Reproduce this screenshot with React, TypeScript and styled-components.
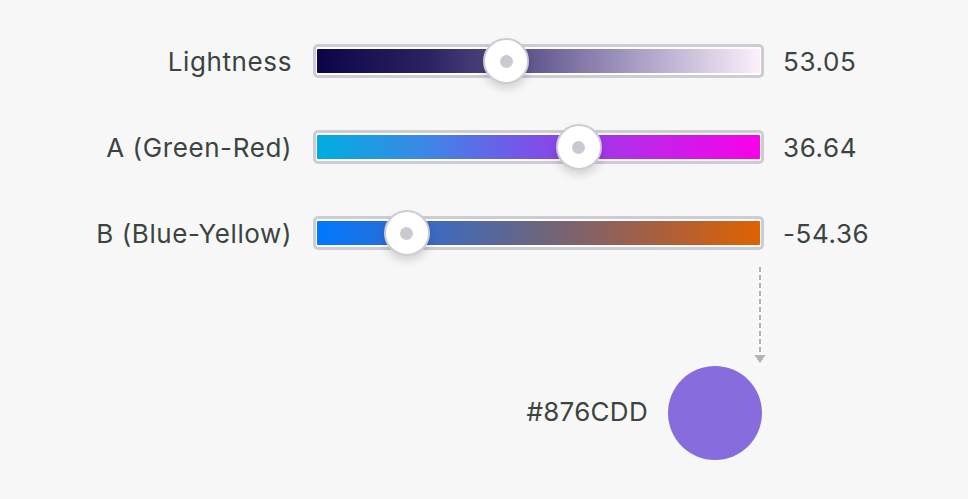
import styled, { createGlobalStyle } from 'styled-components';

const GlobalStyle = createGlobalStyle`
  html, body {
    margin: 0;
    padding: 0;
    background: #f7f7f7;
  }
  body {
    font-family: Inter, "Liberation Sans", sans-serif;
    color: #3a4441;
  }
`;

const Page = styled.div`
  width: 968px;
  height: 499px;
  padding-top: 44px;
  box-sizing: border-box;
  overflow: hidden;
`;

const Sliders = styled.div`
  display: grid;
  grid-template-columns: 292px 451px auto;
  grid-auto-rows: 34px;
  column-gap: 21px;
  row-gap: 52px;
  align-items: center;
`;

const Label = styled.div`
  text-align: right;
  font-size: 26px;
  letter-spacing: 0.6px;
  white-space: nowrap;
`;

const Value = styled.div`
  font-size: 26px;
  letter-spacing: 0.6px;
  margin-left: -2px;
`;

const Track = styled.div`
  position: relative;
  height: 34px;
  box-sizing: border-box;
  border: 3px solid #cdccd4;
  border-radius: 5px;
  background: #fff;
  padding: 2px 1px;
`;

const Fill = styled.div<{ $gradient: string }>`
  height: 100%;
  border-radius: 1px;
  background: ${(p) => p.$gradient};
`;

const Thumb = styled.div<{ $pos: number }>`
  position: absolute;
  top: 50%;
  left: ${(p) => p.$pos}%;
  width: 46px;
  height: 46px;
  box-sizing: border-box;
  transform: translate(-50%, -50%);
  border-radius: 50%;
  border: 2px solid #cdccd4;
  background: #fff;
  box-shadow: 0 5px 9px rgba(0, 0, 0, 0.14);
  display: flex;
  align-items: center;
  justify-content: center;

  &::after {
    content: '';
    width: 13px;
    height: 13px;
    border-radius: 50%;
    background: #c9c9d1;
  }
`;

const Result = styled.div`
  width: 762px;
  display: flex;
  flex-direction: column;
  align-items: flex-end;
  margin-top: 17px;
`;

const Arrow = styled.svg`
  display: block;
  margin-right: -4px;
`;

const Swatch = styled.div`
  display: flex;
  align-items: center;
  gap: 20px;
  margin-top: 2px;
`;

const HexCode = styled.span`
  font-size: 26px;
  letter-spacing: 0.3px;
  margin-top: -4px;
`;

const Circle = styled.div<{ $color: string }>`
  width: 94px;
  height: 94px;
  border-radius: 50%;
  background: ${(p) => p.$color};
`;

const channels = [
  {
    label: 'Lightness',
    value: '53.05',
    pos: 42.7,
    gradient:
      'linear-gradient(to right, #0b0548 0%, #2b2262 25%, #675c92 50%, #b1a6ca 75%, #fbf0fa 100%)',
  },
  {
    label: 'A (Green-Red)',
    value: '36.64',
    pos: 59,
    gradient:
      'linear-gradient(to right, #00ade0 0%, #3e86e6 25%, #7f4ee8 50%, #c025ea 75%, #fa00e9 100%)',
  },
  {
    label: 'B (Blue-Yellow)',
    value: '-54.36',
    pos: 20.4,
    gradient:
      'linear-gradient(to right, #0078ff 0%, #3a6bc4 25%, #6b657f 50%, #a45f44 75%, #df6200 100%)',
  },
];

export default function App() {
  return (
    <Page>
      <GlobalStyle />
      <Sliders>
        {channels.map((c) => [
          <Label key={c.label + '-l'}>{c.label}</Label>,
          <Track key={c.label + '-t'}>
            <Fill $gradient={c.gradient} />
            <Thumb $pos={c.pos} />
          </Track>,
          <Value key={c.label + '-v'}>{c.value}</Value>,
        ])}
      </Sliders>
      <Result>
        <Arrow width="12" height="97" viewBox="0 0 12 97">
          <line x1="6" y1="0" x2="6" y2="88" stroke="#b1b1b9" strokeWidth="2" strokeDasharray="5 3" />
          <polygon points="0.5,88 11.5,88 6,96" fill="#b1b1b9" />
        </Arrow>
        <Swatch>
          <HexCode>#876CDD</HexCode>
          <Circle $color="#876CDD" />
        </Swatch>
      </Result>
    </Page>
  );
}
